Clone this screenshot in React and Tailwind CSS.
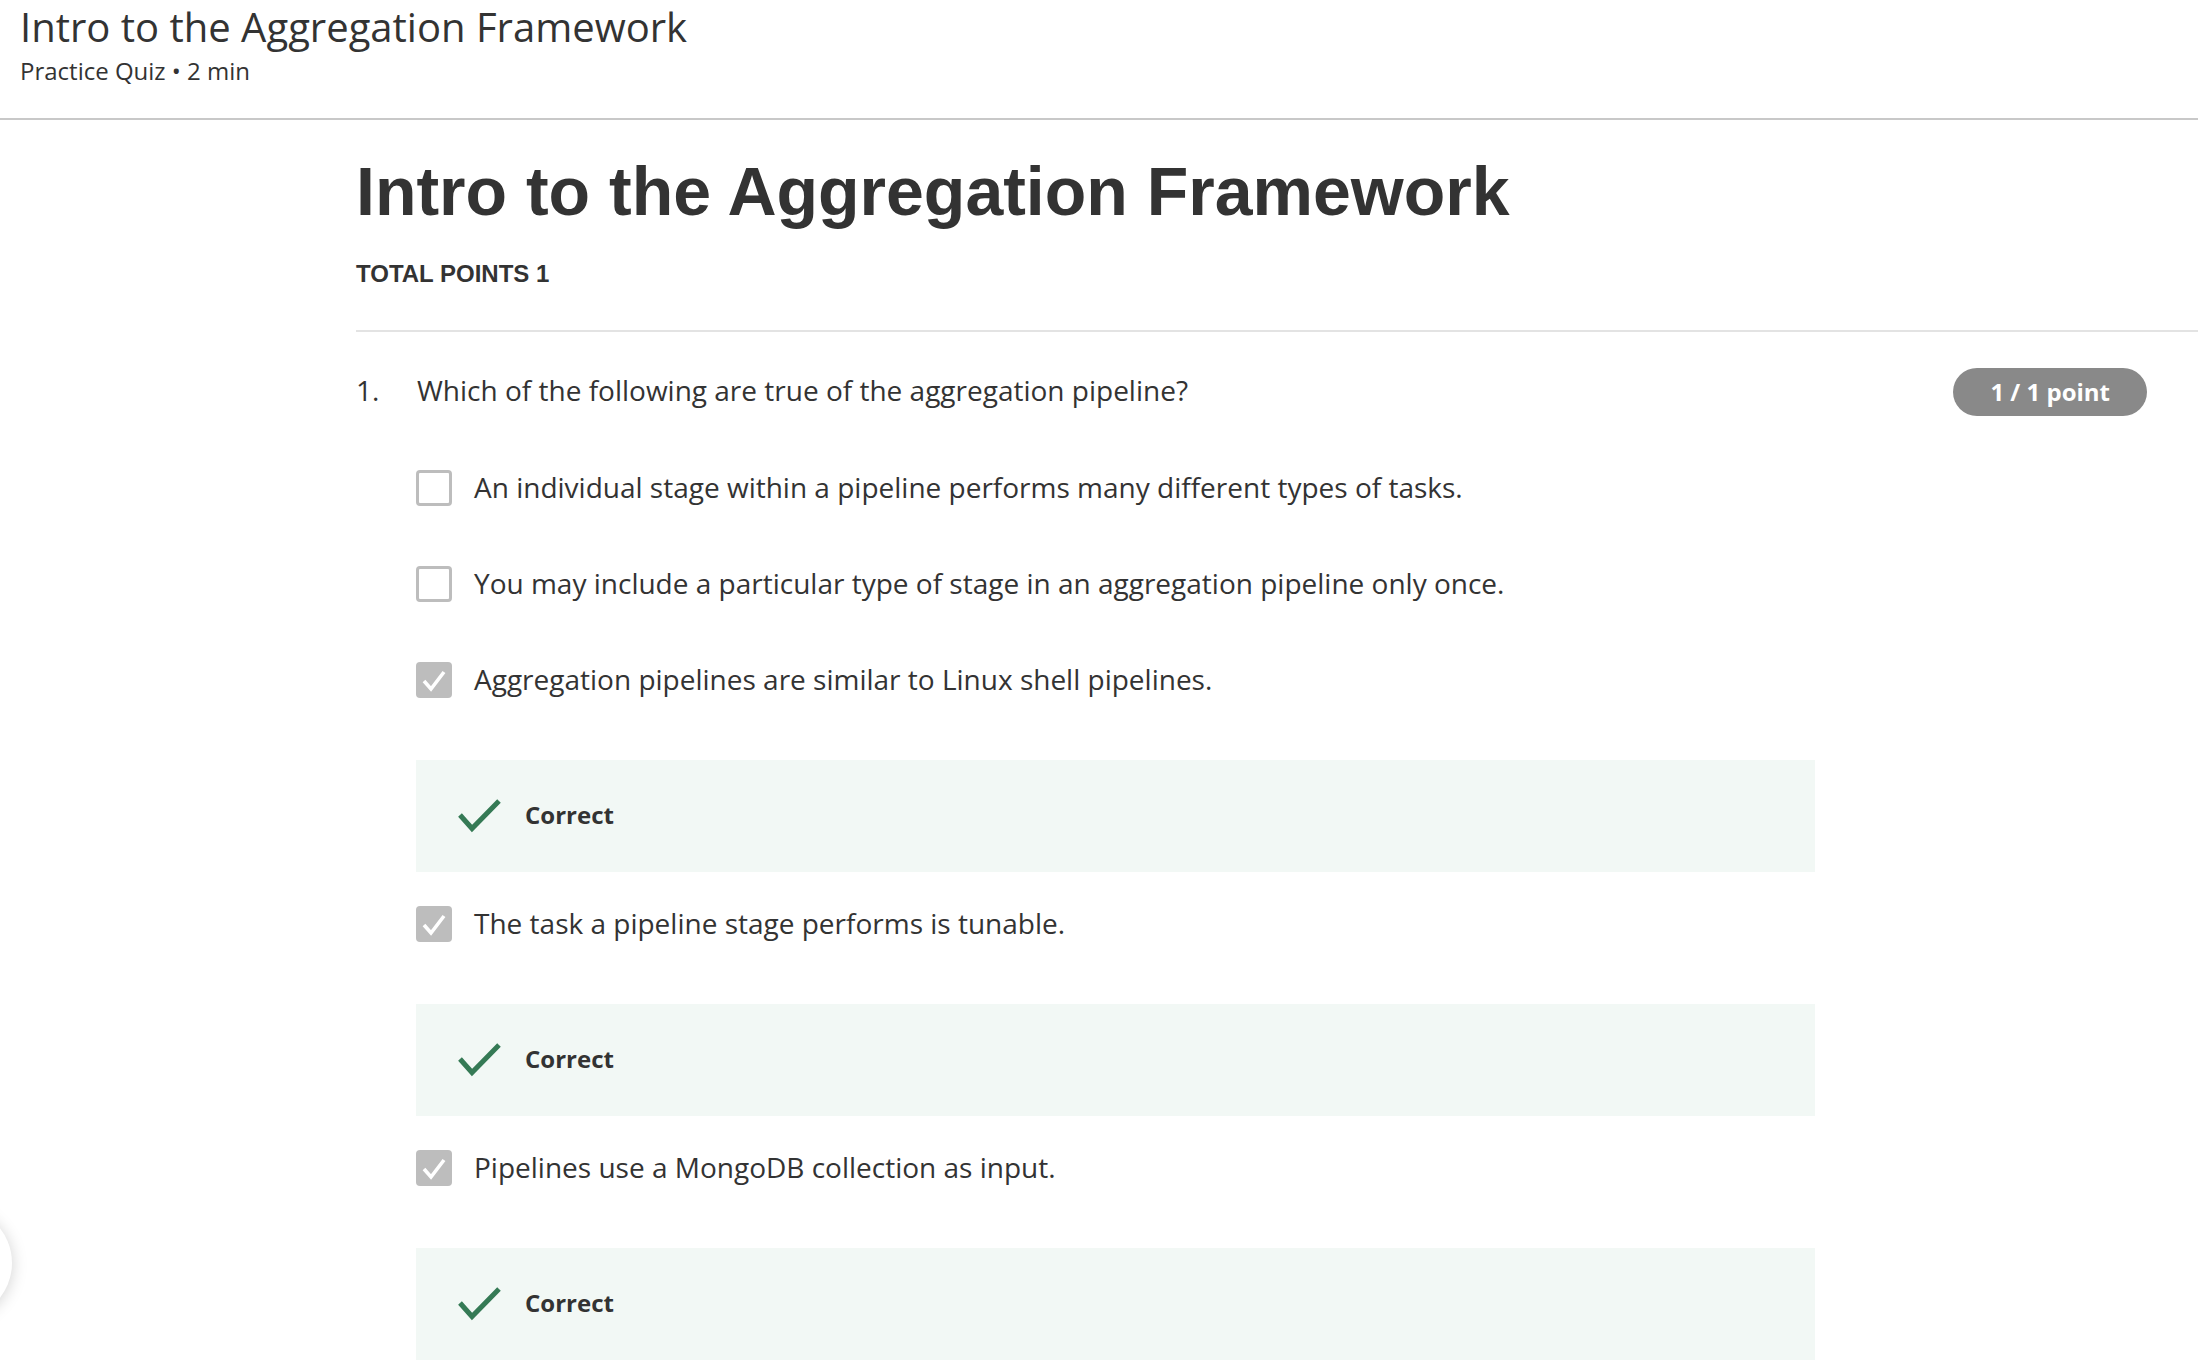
import React from "react";

const options = [
  { text: "An individual stage within a pipeline performs many different types of tasks.", checked: false },
  { text: "You may include a particular type of stage in an aggregation pipeline only once.", checked: false },
  { text: "Aggregation pipelines are similar to Linux shell pipelines.", checked: true },
  { text: "The task a pipeline stage performs is tunable.", checked: true },
  { text: "Pipelines use a MongoDB collection as input.", checked: true },
];

function Checkbox({ checked }) {
  if (checked) {
    return (
      <div className="w-[36px] h-[36px] shrink-0 rounded-[4px] bg-[#bdbdbd] flex items-center justify-center">
        <svg width="36" height="36" viewBox="0 0 36 36">
          <polyline points="8,19 15,27 28,10" fill="none" stroke="#ffffff" strokeWidth="3.6" />
        </svg>
      </div>
    );
  }
  return <div className="w-[36px] h-[36px] shrink-0 rounded-[4px] border-[3px] border-[#bdbdbd] bg-white" />;
}

function Feedback() {
  return (
    <div className="mt-[60px] h-[112px] w-[1399px] bg-[#f2f8f5] flex items-center pl-[42px] gap-[23px]">
      <svg width="44" height="34" viewBox="0 0 44 34" className="shrink-0">
        <polyline points="2,16 14,29.5 41,2" fill="none" stroke="#357a55" strokeWidth="5" />
      </svg>
      <span className="text-[24px] leading-[32px] font-bold text-[#333333] -mt-[2px]">Correct</span>
    </div>
  );
}

export default function App() {
  return (
    <div className="relative min-h-screen bg-white overflow-hidden font-['Open_Sans',sans-serif] text-[#333333]">
      <header className="h-[120px] border-b-2 border-[#c8c8c8] pl-[20px] pt-[3px]">
        <h1 className="text-[40px] leading-[48px] font-normal">Intro to the Aggregation Framework</h1>
        <p className="mt-[4px] text-[24px] leading-[32px]">Practice Quiz • 2 min</p>
      </header>

      <main className="pl-[356px]">
        <div className="pt-[31px]">
          <h2 className="text-[68px] leading-[80px] font-bold font-['Liberation_Sans',Arial,sans-serif] text-[#333333]">
            Intro to the Aggregation Framework
          </h2>
          <div className="mt-[27px] text-[24px] leading-[32px] font-bold font-['Liberation_Sans',Arial,sans-serif] text-[#333333]">
            TOTAL POINTS 1
          </div>
        </div>

        <div className="mt-[40px] h-[2px] bg-[#e3e3e3]" />

        <section className="pt-[36px] pr-[51px]">
          <div className="flex items-center justify-between h-[48px]">
            <div className="flex items-center text-[28px] leading-[40px] -mt-[4px]">
              <span className="w-[61px]">1.</span>
              <span>Which of the following are true of the aggregation pipeline?</span>
            </div>
            <div className="h-[48px] px-[37px] rounded-full bg-[#898989] text-white font-bold text-[24px] leading-[32px] flex items-center">
              1 / 1 point
            </div>
          </div>

          <div className="ml-[60px] mt-[52px] flex flex-col">
            {options.map((o, i) => (
              <div key={i} className={o.checked ? "mb-[32px]" : "mb-[56px]"}>
                <div className="flex items-center h-[40px] gap-[22px]">
                  <Checkbox checked={o.checked} />
                  <span className="text-[28px] leading-[40px] -mt-[2px]">{o.text}</span>
                </div>
                {o.checked && <Feedback />}
              </div>
            ))}
          </div>
        </section>
      </main>

      <div className="absolute left-[-100px] top-[1207px] w-[112px] h-[112px] rounded-full bg-white shadow-[0_2px_16px_rgba(0,0,0,0.18)]" />
    </div>
  );
}
